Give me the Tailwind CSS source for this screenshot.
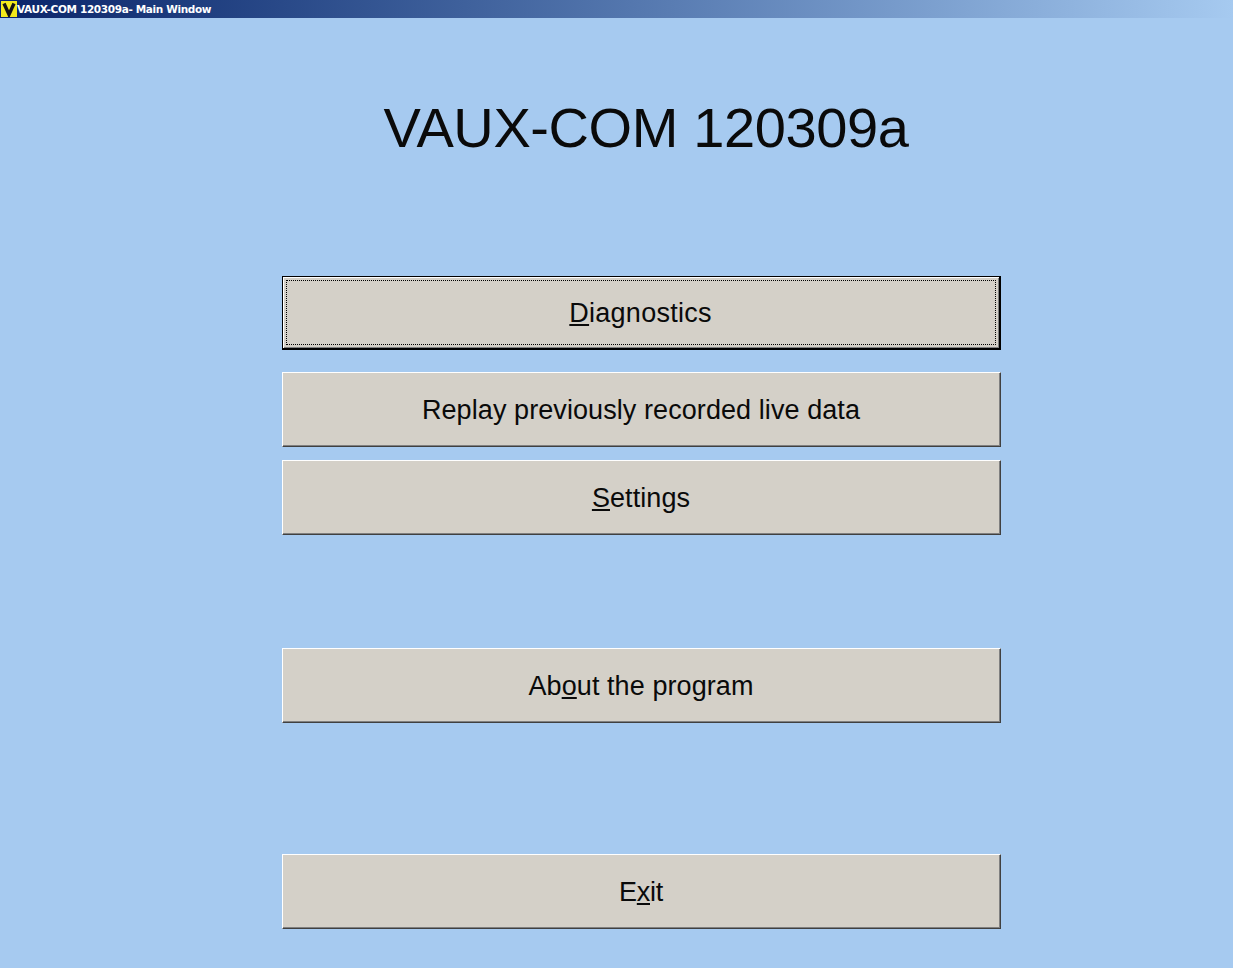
<!DOCTYPE html>
<html>
<head>
<meta charset="utf-8">
<script src="https://cdn.jsdelivr.net/npm/@tailwindcss/browser@4"></script>
</head>
<body class="m-0">
<div class="w-[1233px] h-[968px] overflow-hidden flex flex-col bg-[#a6caf0] font-['Liberation_Sans',Arial,sans-serif] text-[#0a0a0a]">
  <div class="h-[18px] shrink-0 flex items-center bg-gradient-to-r from-[#0a246a] to-[#a6caf0]">
    <svg class="ml-px shrink-0" width="16" height="16" viewBox="0 0 16 16"><rect width="16" height="16" fill="#f2ea1c"/><path d="M3 2.5 L8 13.5 L13 2.5" fill="none" stroke="#141414" stroke-width="3.4"/></svg>
    <span class="text-[10.5px] font-bold text-white leading-none font-['DejaVu_Sans',sans-serif] tracking-[-0.35px]">VAUX-COM 120309a- Main Window</span>
  </div>
  <div class="flex-1 flex flex-col items-center">
    <h1 class="mt-[76px] ml-[59px] text-[56px] leading-[67px] font-normal tracking-[-0.4px]">VAUX-COM 120309a</h1>
    <div class="mt-[115px] ml-[49px] w-[719px] flex flex-col">
      <button class="h-[74px] border border-r-2 border-b-2 border-black bg-[#d4d0c8] p-[3px] text-[27px] tracking-[0.25px] shadow-[inset_1px_1px_0_#fff,inset_-1px_-1px_0_#808080]"><span class="flex h-full items-center justify-center border border-dotted border-black pt-[2px]"><span><u>D</u>iagnostics</span></span></button>
      <button class="mt-[22px] h-[75px] pt-[2px] border border-t-white border-l-white border-r-[#404040] border-b-[#404040] bg-[#d4d0c8] text-[27px] tracking-[0.08px] shadow-[inset_-1px_-1px_0_#808080]">Replay previously recorded live data</button>
      <button class="mt-[13px] h-[75px] pt-[2px] border border-t-white border-l-white border-r-[#404040] border-b-[#404040] bg-[#d4d0c8] text-[27px] tracking-[0.08px] shadow-[inset_-1px_-1px_0_#808080]"><u>S</u>ettings</button>
      <button class="mt-[113px] h-[75px] pt-[2px] border border-t-white border-l-white border-r-[#404040] border-b-[#404040] bg-[#d4d0c8] text-[27px] tracking-[0.08px] shadow-[inset_-1px_-1px_0_#808080]">Ab<u>o</u>ut the program</button>
      <button class="mt-[131px] h-[75px] pt-[2px] border border-t-white border-l-white border-r-[#404040] border-b-[#404040] bg-[#d4d0c8] text-[27px] tracking-[-0.3px] shadow-[inset_-1px_-1px_0_#808080]">E<u>x</u>it</button>
    </div>
  </div>
</div>
</body>
</html>
